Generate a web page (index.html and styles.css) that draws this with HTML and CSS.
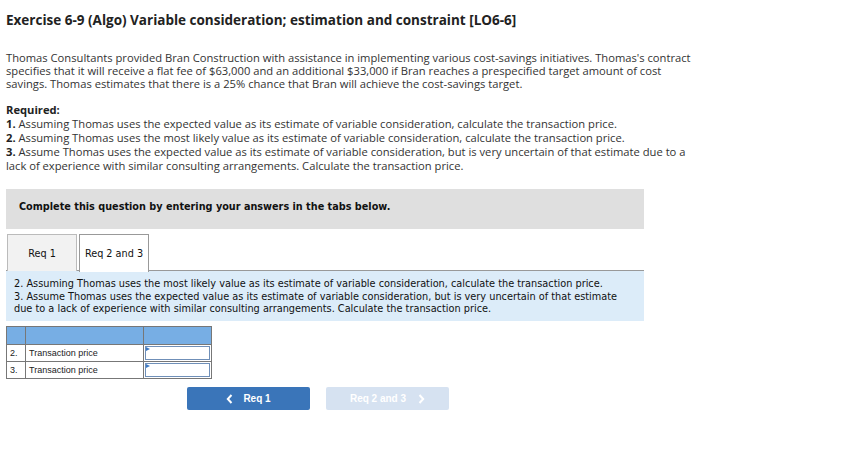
FILE: index.html
```html
<!DOCTYPE html>
<html>
<head>
<meta charset="utf-8">
<link rel="stylesheet" href="styles.css">
</head>
<body>
<div class="page">
  <h1 class="title">Exercise 6-9 (Algo) Variable consideration; estimation and constraint [LO6-6]</h1>
  <p class="intro">Thomas Consultants provided Bran Construction with assistance in implementing various cost-savings initiatives. Thomas's contract specifies that it will receive a flat fee of $63,000 and an additional $33,000 if Bran reaches a prespecified target amount of cost savings. Thomas estimates that there is a 25% chance that Bran will achieve the cost-savings target.</p>
  <div class="required">
    <div class="req-label">Required:</div>
    <div class="req-item"><b>1.</b> Assuming Thomas uses the expected value as its estimate of variable consideration, calculate the transaction price.</div>
    <div class="req-item"><b>2.</b> Assuming Thomas uses the most likely value as its estimate of variable consideration, calculate the transaction price.</div>
    <div class="req-item"><b>3.</b> Assume Thomas uses the expected value as its estimate of variable consideration, but is very uncertain of that estimate due to a lack of experience with similar consulting arrangements. Calculate the transaction price.</div>
  </div>
  <div class="notice">Complete this question by entering your answers in the tabs below.</div>
  <div class="tabs">
    <div class="tab">Req 1</div>
    <div class="tab active">Req 2 and 3</div>
  </div>
  <div class="panel">2. Assuming Thomas uses the most likely value as its estimate of variable consideration, calculate the transaction price.<br>3. Assume Thomas uses the expected value as its estimate of variable consideration, but is very uncertain of that estimate due to a lack of experience with similar consulting arrangements. Calculate the transaction price.</div>
  <table class="answers">
    <tr class="head"><td class="num"></td><td class="lbl"></td><td class="val"></td></tr>
    <tr><td class="num">2.</td><td class="lbl">Transaction price</td><td class="val"><div class="input"><span class="flag"></span></div></td></tr>
    <tr><td class="num">3.</td><td class="lbl">Transaction price</td><td class="val"><div class="input"><span class="flag"></span></div></td></tr>
  </table>
  <div class="nav">
    <div class="btn prev"><svg class="chev left" width="7" height="10" viewBox="0 0 7 10"><polyline points="5.5,1 1.8,5 5.5,9" fill="none" stroke="#fff" stroke-width="2"/></svg>Req 1</div>
    <div class="btn next disabled">Req 2 and 3<svg class="chev right" width="7" height="10" viewBox="0 0 7 10"><polyline points="1.5,1 5.2,5 1.5,9" fill="none" stroke="#fff" stroke-width="2"/></svg></div>
  </div>
</div>
</body>
</html>
```
FILE: styles.css
```css
html, body { margin: 0; padding: 0; background: #fff; }
.page {
  padding: 12px 6px 20px 6px;
  font-family: "Open Sans", "Liberation Sans", sans-serif;
  color: #222;
  width: 688px;
}
.title {
  margin: 0;
  font-size: 13.5px;
  font-weight: 700;
  line-height: 17px;
  color: #222;
}
.intro {
  margin: 22px 0 0 0;
  font-size: 11.2px;
  line-height: 13px;
  color: #333;
}
.required {
  margin-top: 13px;
  font-size: 11.2px;
  line-height: 14px;
  color: #333;
}
.req-label { font-weight: 700; color: #222; }
.required b { color: #222; display: inline-block; height: 14px; line-height: 14px; }
.notice {
  margin-top: 16px;
  width: 638px;
  height: 40px;
  box-sizing: border-box;
  background: #dfdfdf;
  padding: 12px 0 0 13px;
  font-family: Verdana, "DejaVu Sans", sans-serif;
  font-weight: 700;
  font-size: 9.7px;
  color: #111;
}
.tabs {
  margin-top: 5px;
  width: 638px;
  display: flex;
  gap: 2px;
  padding-left: 1px;
  box-sizing: border-box;
  border-bottom: 1px solid #999;
  height: 37px;
}
.tab {
  width: 70px;
  height: 37px;
  box-sizing: border-box;
  border: 1px solid #bbb;
  border-bottom: none;
  background: #f2f2f2;
  font-family: Verdana, "DejaVu Sans", sans-serif;
  font-size: 9.7px;
  color: #111;
  display: flex;
  align-items: center;
  justify-content: center;
}
.tab.active {
  background: #fff;
  border-color: #999;
  margin-bottom: -1px;
  height: 38px;
}
.panel {
  width: 638px;
  box-sizing: border-box;
  background: #dcecf9;
  padding: 7px 8px 7px 8px;
  font-family: Verdana, "DejaVu Sans", sans-serif;
  font-size: 9.75px;
  line-height: 12.5px;
  color: #111;
  height: 50px;
}
.answers {
  margin-top: 5px;
  border-collapse: collapse;
  font-family: Arial, "Liberation Sans", sans-serif;
  font-size: 9px;
  color: #222;
}
.answers td {
  border: 1px solid #777;
  height: 16px;
  padding: 0;
}
.answers tr.head td { background: #77aee4; height: 17px; }
.answers .num { width: 19px; text-align: left; padding-left: 3px; box-sizing: border-box; }
.answers .lbl { width: 118px; padding-left: 3px; box-sizing: border-box; }
.answers .val { width: 67px; }
.input {
  position: relative;
  height: 12px;
  margin: 1px;
  border: 1px solid #6f8fb8;
}
.flag {
  position: absolute;
  left: 0;
  top: 0;
  width: 0; height: 0;
  border-top: 2px solid transparent;
  border-bottom: 2px solid transparent;
  border-left: 4px solid #3d7ac4;
}
.nav {
  margin-top: 8px;
  padding-left: 181px;
  display: flex;
  gap: 16px;
}
.btn {
  width: 123px;
  height: 23px;
  border-radius: 2px;
  display: flex;
  align-items: center;
  justify-content: center;
  font-family: Arial, "Liberation Sans", sans-serif;
  font-weight: 700;
  font-size: 10px;
  color: #fff;
}
.btn.prev { background: #3a75b9; }
.btn.disabled { background: #d6e2f1; }
.chev.left { margin-right: 10px; }
.chev.right { margin-left: 12px; }
```
